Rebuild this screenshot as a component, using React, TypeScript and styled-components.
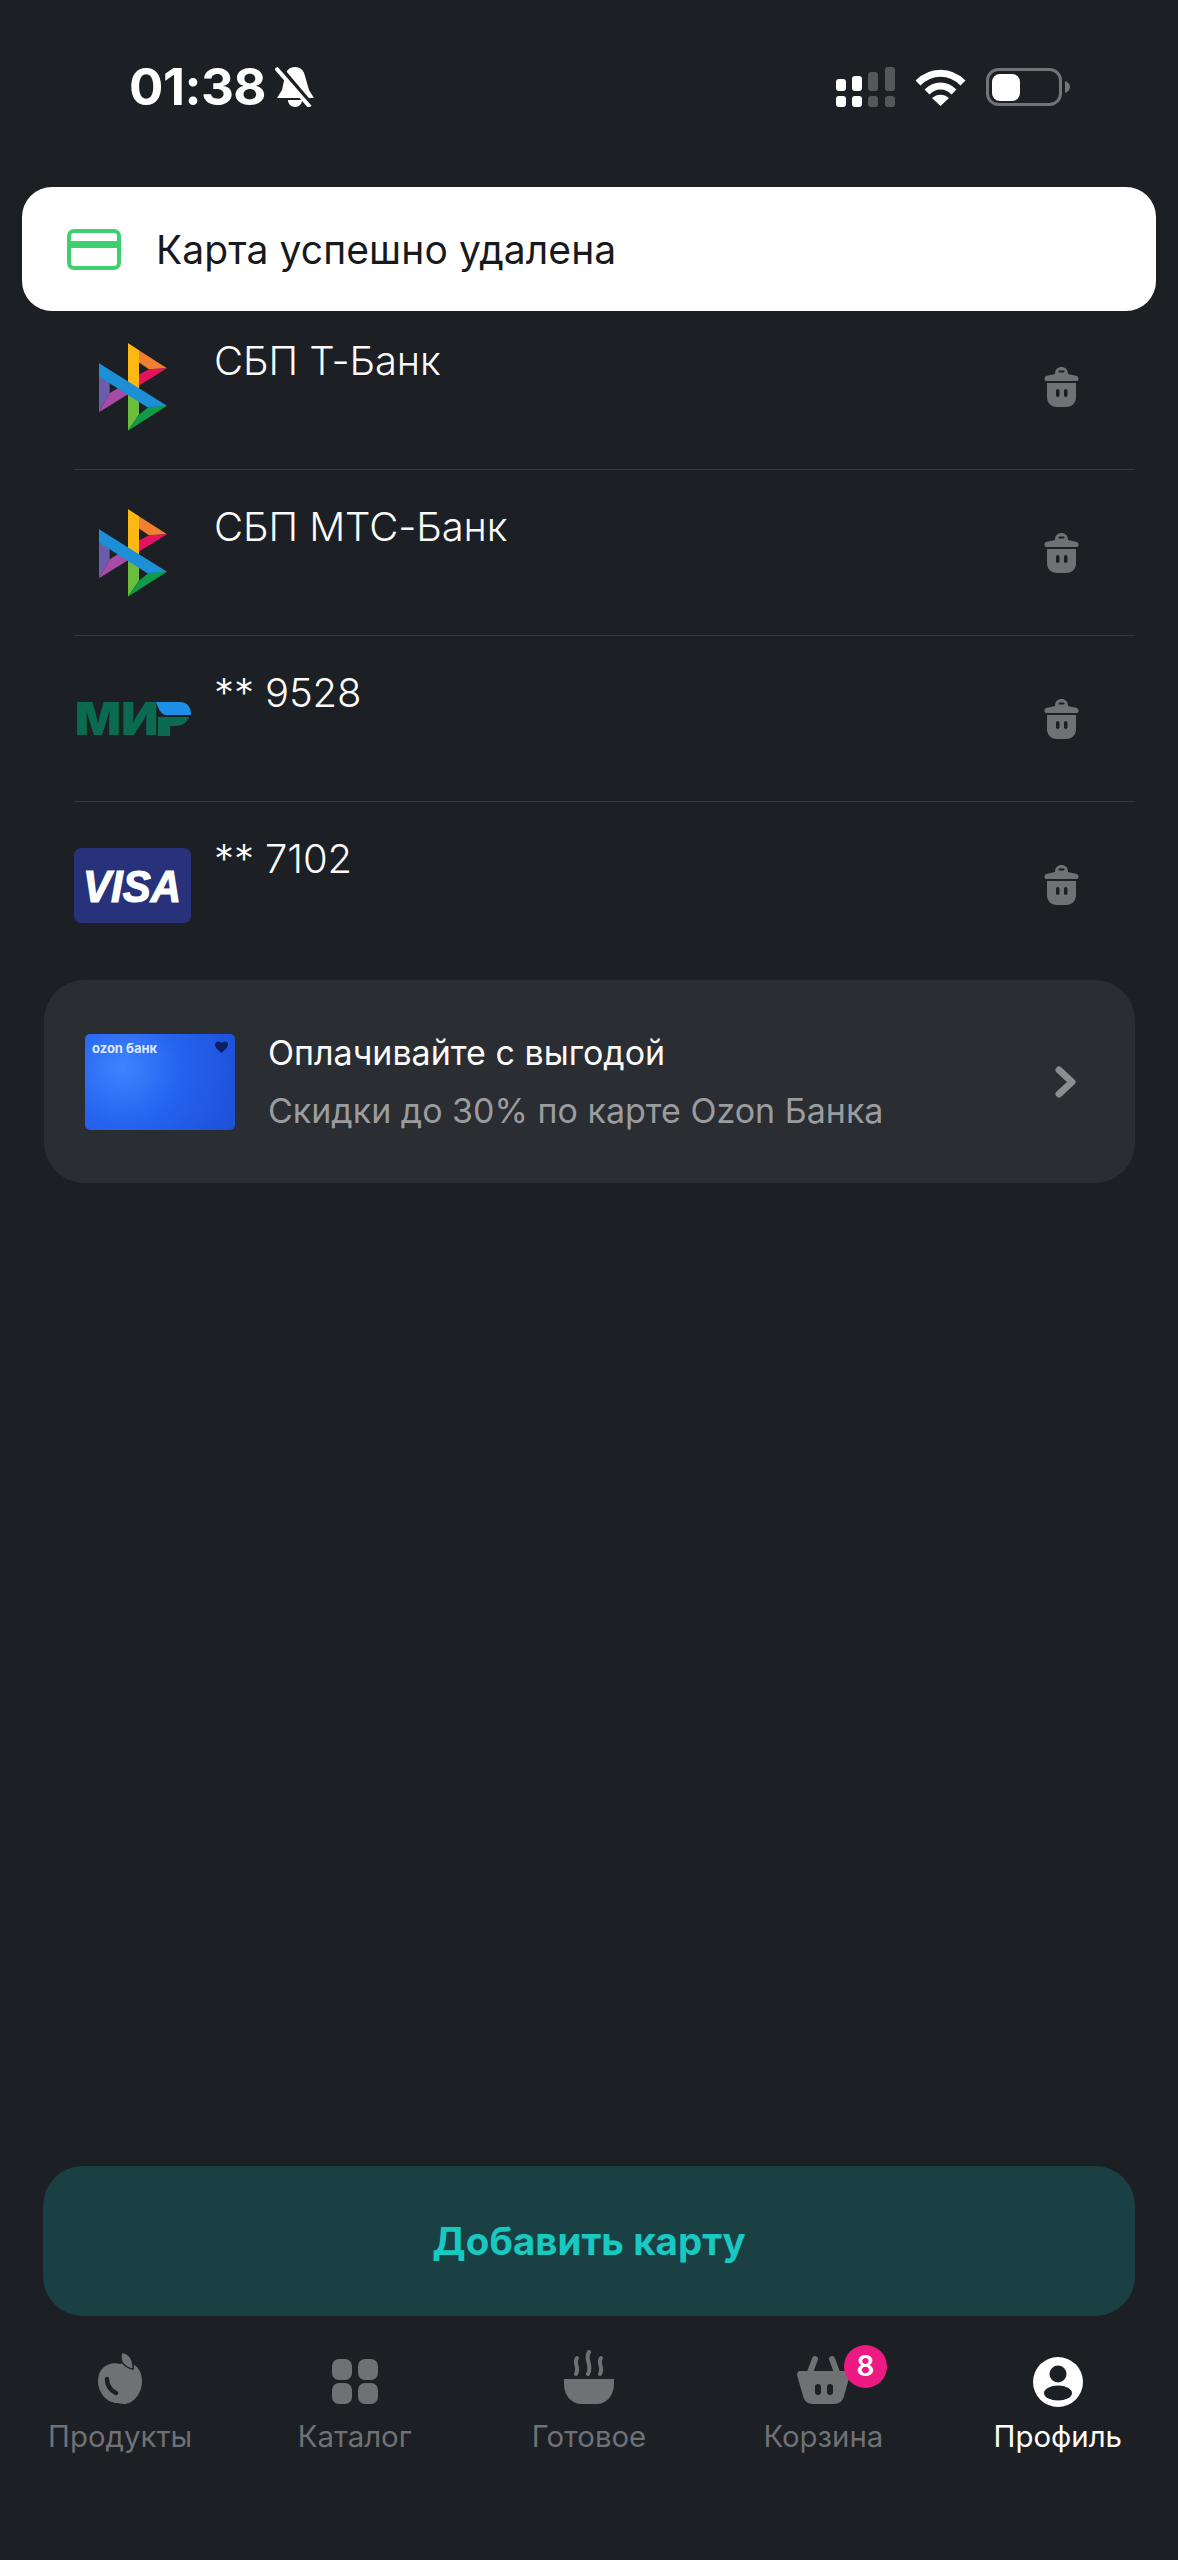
import styled, { createGlobalStyle } from "styled-components"

const GlobalStyle = createGlobalStyle`
  html, body {
    margin: 0;
    padding: 0;
    background: #1c1f24;
  }
  * {
    box-sizing: border-box;
  }
`

const Page = styled.div`
  position: relative;
  width: 1178px;
  height: 2560px;
  display: flex;
  flex-direction: column;
  background: #1c1f24;
  color: #fff;
  font-family: Inter, "Noto Sans", sans-serif;
  overflow: hidden;
`

const StatusBar = styled.div`
  height: 304px;
  flex-shrink: 0;
  padding: 62px 108px 0 129px;
  display: flex;
  justify-content: space-between;
  align-items: flex-start;
`

const TimeGroup = styled.div`
  display: flex;
  align-items: center;
  gap: 9px;
  height: 50px;
`

const Clock = styled.span`
  font-size: 51px;
  font-weight: 700;
  letter-spacing: -0.5px;
  line-height: 50px;
`

const Indicators = styled.div`
  display: flex;
  align-items: center;
  gap: 20px;
  height: 50px;
`

const Toast = styled.div`
  position: absolute;
  left: 22px;
  top: 187px;
  width: 1134px;
  height: 124px;
  background: #fff;
  border-radius: 30px;
  display: flex;
  align-items: center;
  gap: 35px;
  padding-left: 45px;
  color: #17191c;
  font-size: 39px;
  letter-spacing: 0.1px;
`

const List = styled.div`
  margin: 0 43px 0 74px;
  flex-shrink: 0;
`

const Row = styled.div`
  height: 166px;
  display: flex;
  align-items: center;
  border-bottom: 1px solid #35383c;

  &:last-child {
    border-bottom: none;
  }
`

const LogoSlot = styled.div`
  width: 117px;
  flex-shrink: 0;
  display: flex;
  justify-content: center;
  align-items: center;

  svg {
    flex-shrink: 0;
  }
`

const RowTitle = styled.div`
  flex: 1;
  align-self: flex-start;
  margin-left: 23px;
  padding-top: 32px;
  font-size: 40px;
  font-weight: 350;
  letter-spacing: -0.1px;
  line-height: 50px;
  color: #fbfbfb;
`

const DeleteButton = styled.div`
  width: 35px;
  margin-right: 56px;
  display: flex;
`

const Promo = styled.div`
  margin: 12px 43px 0 44px;
  height: 203px;
  flex-shrink: 0;
  background: #2a2d32;
  border-radius: 40px;
  display: flex;
  align-items: center;
  padding: 0 58px 0 41px;
`

const OzonCard = styled.div`
  position: relative;
  width: 150px;
  height: 96px;
  flex-shrink: 0;
  border-radius: 5px;
  background: radial-gradient(circle at 25% 35%, #3f83ff 0%, #2563ee 45%, #1c4fd6 100%);
  padding: 6px 7px;
  font-size: 13px;
  font-weight: 700;
  line-height: 16px;
  color: #dfe9ff;
`

const CardHeart = styled.svg`
  position: absolute;
  top: 7px;
  right: 7px;
`

const PromoText = styled.div`
  flex: 1;
  margin-left: 33px;
  display: flex;
  flex-direction: column;
  gap: 14px;
`

const PromoTitle = styled.div`
  font-size: 34px;
  line-height: 44px;
  color: #fafafa;
`

const PromoSubtitle = styled.div`
  font-size: 34px;
  line-height: 44px;
  color: #9a9c9f;
`

const Spacer = styled.div`
  flex: 1;
`

const AddButton = styled.div`
  margin: 0 43px;
  height: 150px;
  flex-shrink: 0;
  background: #1b4044;
  border-radius: 40px;
  display: flex;
  align-items: center;
  justify-content: center;
  color: #17c9c0;
  font-size: 38.5px;
  font-weight: 700;
`

const Nav = styled.nav`
  height: 244px;
  flex-shrink: 0;
  padding: 20px 3px 0 3px;
  display: grid;
  grid-template-columns: repeat(5, 1fr);
`

const NavItem = styled.div<{ $active?: boolean }>`
  display: flex;
  flex-direction: column;
  align-items: center;
  color: ${(p) => (p.$active ? "#fff" : "#6f7175")};
  font-size: 29.4px;
  line-height: 40px;
`

const NavIcon = styled.div<{ $drop?: number }>`
  position: relative;
  height: 68px;
  margin-bottom: 13px;
  display: flex;
  align-items: flex-end;
  justify-content: center;

  svg {
    margin-bottom: ${(p) => (p.$drop ? -p.$drop : 0)}px;
  }
`

const Badge = styled.span`
  position: absolute;
  left: 47px;
  top: 9px;
  width: 43px;
  height: 43px;
  border-radius: 50%;
  background: #ee1a83;
  color: #fff;
  font-size: 28px;
  font-weight: 600;
  line-height: 43px;
  text-align: center;
`

const SbpLogo = () => (
  <svg width="68" height="88" viewBox="0 0 204 263">
    <polygon points="87,0 204,75 150,78 120,58 87,30" fill="#f08030" />
    <polygon points="204,75 120,127 120,94 150,78" fill="#e5135f" />
    <polygon points="87,0 120,22 120,150 87,132" fill="#fdb913" />
    <polygon points="0,60 32,82 32,150 0,207" fill="#6d5bab" />
    <polygon points="0,207 32,150 60,133 87,153" fill="#a64ca6" />
    <polygon points="87,132 120,152 120,215 87,263" fill="#6cbd3c" />
    <polygon points="87,263 120,215 150,190 204,188" fill="#0f9b48" />
    <polygon points="0,60 204,188 145,192 0,100" fill="#1c8fd6" />
  </svg>
)

const MirLogo = () => (
  <svg width="125" height="64" viewBox="-4 -14 125 64">
    <text x="1" y="34" fontFamily="Inter, sans-serif" fontWeight="900" fontSize="46" textLength="115" lengthAdjust="spacingAndGlyphs" fill="#0b6b50">МИР</text>
    <rect x="84" y="-8" width="33" height="28" fill="#1c1f24" />
    <path d="M82 1 H106 C113 1 117 6 117 14 H92 C87 14 84 7 82 1 Z" fill="#1e8fe8" />
    <path d="M84 16 H115 C113 22 108 25 101 25 H96 V35 H84 Z" fill="#0b6b50" />
  </svg>
)

const VisaLogo = () => (
  <svg width="117" height="75" viewBox="0 0 117 75">
    <rect width="117" height="75" rx="7" fill="#27327a" />
    <text x="58" y="54" textAnchor="middle" fontFamily="Liberation Sans, sans-serif" fontWeight="700" fontStyle="italic" fontSize="44" textLength="98" lengthAdjust="spacingAndGlyphs" fill="#fff" stroke="#fff" strokeWidth="1.200">VISA</text>
  </svg>
)

const TrashIcon = () => (
  <svg width="35" height="40" viewBox="0 0 35 40" fill="#6f7175">
    <path d="M11 7 C11 2 14 0 17.5 0 C21 0 24 2 24 7 L33 9 C35 10 35 14 33 14 H2 C0 14 0 10 2 9 Z" />
    <path d="M3 16 H32 V30 C32 36 28 40 22 40 H13 C7 40 3 36 3 30 Z" />
    <rect x="12" y="22" width="3.5" height="8" rx="1.7" fill="#1c1f24" />
    <rect x="20" y="22" width="3.5" height="8" rx="1.7" fill="#1c1f24" />
    <rect x="14.5" y="3.5" width="6" height="2" rx="1" fill="#1c1f24" />
  </svg>
)

const SignalIcon = () => (
  <svg width="59" height="40" viewBox="0 0 59 40">
    <rect x="0" y="12" width="10" height="12" rx="3" fill="#fff" />
    <rect x="16" y="9" width="10" height="15" rx="3" fill="#fff" />
    <rect x="32" y="5" width="10" height="19" rx="3" fill="#55575b" />
    <rect x="49" y="0" width="10" height="24" rx="3" fill="#55575b" />
    <rect x="0" y="29" width="10" height="11" rx="3" fill="#fff" />
    <rect x="16" y="29" width="10" height="11" rx="3" fill="#fff" />
    <rect x="32" y="29" width="10" height="11" rx="3" fill="#55575b" />
    <rect x="49" y="29" width="10" height="11" rx="3" fill="#55575b" />
  </svg>
)

const WifiIcon = () => (
  <svg width="51" height="37" viewBox="0 0 51 37" fill="none" stroke="#fff" strokeWidth="7">
    <path d="M3 14 C16 1 35 1 48 14" />
    <path d="M12 23 C20 15 31 15 39 23" />
    <path d="M25.5 37 L17 29 C22 24.500 29 24.500 34 29 Z" fill="#fff" stroke="none" />
  </svg>
)

const BatteryIcon = () => (
  <svg width="84" height="38" viewBox="0 0 84 38">
    <rect x="1.500" y="1.500" width="73" height="35" rx="11" fill="none" stroke="#737477" strokeWidth="3" />
    <rect x="6" y="6" width="28" height="27" rx="8" fill="#fff" />
    <path d="M79 13 C82 14 84 16 84 19 C84 22 82 24 79 25 Z" fill="#737477" />
  </svg>
)

const MutedBell = () => (
  <svg width="40" height="40" viewBox="0 0 40 40" fill="#fff">
    <path d="M20 0 C26 0 29 4 30 9 L34 23 L39 31 H2 L7 23 L10 9 C11 4 14 0 20 0 Z" />
    <path d="M13 33 H27 C27 37 24 40 20 40 C16 40 13 37 13 33 Z" />
    <path d="M5 0 L38 39" stroke="#1c1f24" strokeWidth="4" />
    <path d="M1 1 L35 40" stroke="#fff" strokeWidth="4" />
  </svg>
)

const CardIcon = () => (
  <svg width="54" height="41" viewBox="0 0 54 41" fill="none">
    <rect x="2" y="2" width="50" height="37" rx="5" stroke="#3ed070" strokeWidth="4" />
    <rect x="2" y="12" width="50" height="7" fill="#3ed070" />
  </svg>
)

const Chevron = () => (
  <svg width="22" height="32" viewBox="0 0 22 32" fill="none">
    <path d="M4 4 L17 16 L4 28" stroke="#8b8d90" strokeWidth="7" strokeLinecap="round" strokeLinejoin="round" />
  </svg>
)

const AppleIcon = () => (
  <svg width="44" height="52" viewBox="0 0 44 52" fill="#6f7175">
    <path d="M22 12 C32 8 44 14 44 29 C44 43 34 52 26 52 C23 52 21 51 19 51 C10 51 0 42 0 29 C0 15 12 9 22 12 Z" />
    <path d="M24 0 C32 2 36 8 35 17 C28 16 20 10 24 0 Z" stroke="#1c1f24" strokeWidth="1.500" />
    <path d="M9 27 C9 33 12 38 18 41" stroke="#1c1f24" strokeWidth="4.500" fill="none" strokeLinecap="round" />
  </svg>
)

const GridIcon = () => (
  <svg width="46" height="45" viewBox="0 0 46 45" fill="#6f7175">
    <rect width="20" height="21" rx="7" />
    <rect x="26" width="20" height="21" rx="7" />
    <rect y="24" width="20" height="21" rx="7" />
    <rect x="26" y="24" width="20" height="21" rx="7" />
  </svg>
)

const BowlIcon = () => (
  <svg width="50" height="54" viewBox="0 0 50 54" fill="none">
    <path d="M0 29 H50 V34 C50 46 42 54 33 54 H17 C8 54 0 46 0 34 Z" fill="#6f7175" />
    <path d="M13 8 C9 13 16 17 12 24 M25 2 C20 9 29 15 24 24 M37 8 C33 13 40 17 36 24" stroke="#6f7175" strokeWidth="4" strokeLinecap="round" />
  </svg>
)

const BasketIcon = () => (
  <svg width="53" height="48" viewBox="0 0 53 48" fill="#6f7175">
    <path d="M3 15 H50 C52 15 53 17 53 19 L47 40 C46 45 42 48 37 48 H16 C11 48 7 45 6 40 L0 19 C0 17 1 15 3 15 Z" />
    <path d="M12 19 L18 3 M41 19 L35 3" stroke="#6f7175" strokeWidth="6" strokeLinecap="round" />
    <rect x="18" y="28" width="6" height="11" rx="3" fill="#1c1f24" />
    <rect x="30" y="28" width="6" height="11" rx="3" fill="#1c1f24" />
  </svg>
)

const ProfileIcon = () => (
  <svg width="50" height="50" viewBox="0 0 50 50">
    <circle cx="25" cy="25" r="25" fill="#fff" />
    <circle cx="25" cy="17" r="8.500" fill="#1c1f24" />
    <ellipse cx="25" cy="36" rx="14" ry="7.500" fill="#1c1f24" />
  </svg>
)

const rows = [
  { title: "СБП Т-Банк", logo: <SbpLogo /> },
  { title: "СБП МТС-Банк", logo: <SbpLogo /> },
  { title: "** 9528", logo: <MirLogo /> },
  { title: "** 7102", logo: <VisaLogo /> },
]

export default function App() {
  return (
    <Page>
      <GlobalStyle />
      <StatusBar>
        <TimeGroup>
          <Clock>01:38</Clock>
          <MutedBell />
        </TimeGroup>
        <Indicators>
          <SignalIcon />
          <WifiIcon />
          <BatteryIcon />
        </Indicators>
      </StatusBar>

      <Toast>
        <CardIcon />
        <span>Карта успешно удалена</span>
      </Toast>

      <List>
        {rows.map((row) => (
          <Row key={row.title}>
            <LogoSlot>{row.logo}</LogoSlot>
            <RowTitle>{row.title}</RowTitle>
            <DeleteButton>
              <TrashIcon />
            </DeleteButton>
          </Row>
        ))}
      </List>

      <Promo>
        <OzonCard>
          ozon банк
          <CardHeart width="13" height="12" viewBox="0 0 13 12">
            <path d="M6.500 12 C2 8 0 6 0 3.500 C0 1 3.500 -1 6.500 2 C9.500 -1 13 1 13 3.500 C13 6 11 8 6.500 12 Z" fill="#0d1f5c" />
          </CardHeart>
        </OzonCard>
        <PromoText>
          <PromoTitle>Оплачивайте с выгодой</PromoTitle>
          <PromoSubtitle>Скидки до 30% по карте Ozon Банка</PromoSubtitle>
        </PromoText>
        <Chevron />
      </Promo>

      <Spacer />

      <AddButton>Добавить карту</AddButton>

      <Nav>
        <NavItem>
          <NavIcon>
            <AppleIcon />
          </NavIcon>
          Продукты
        </NavItem>
        <NavItem>
          <NavIcon>
            <GridIcon />
          </NavIcon>
          Каталог
        </NavItem>
        <NavItem>
          <NavIcon>
            <BowlIcon />
          </NavIcon>
          Готовое
        </NavItem>
        <NavItem>
          <NavIcon>
            <BasketIcon />
            <Badge>8</Badge>
          </NavIcon>
          Корзина
        </NavItem>
        <NavItem $active>
          <NavIcon $drop={3}>
            <ProfileIcon />
          </NavIcon>
          Профиль
        </NavItem>
      </Nav>
    </Page>
  )
}
